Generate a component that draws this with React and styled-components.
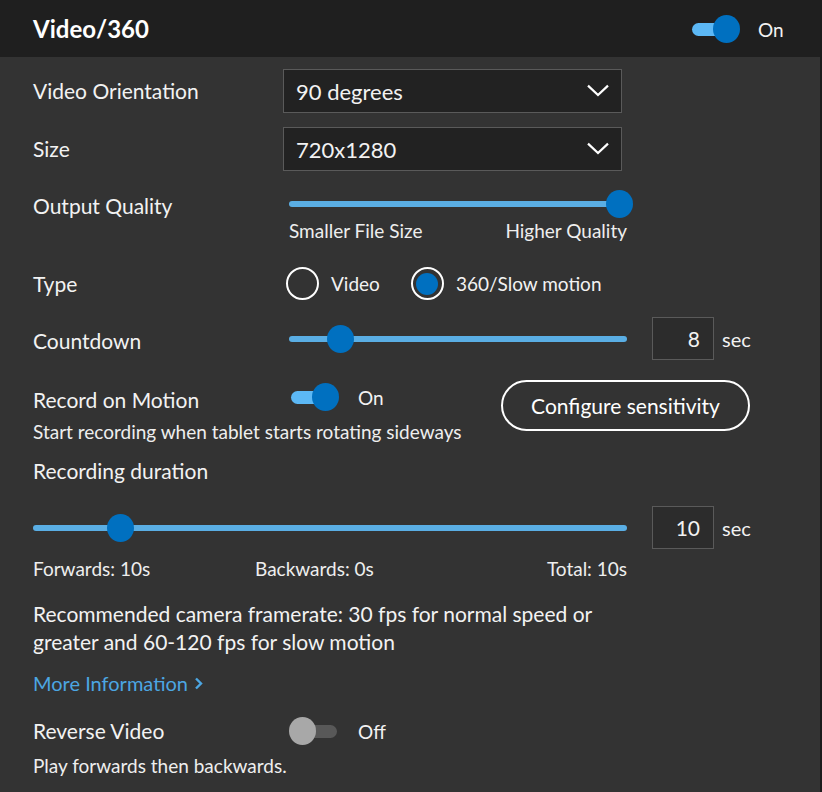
import React from "react";
import styled, { createGlobalStyle } from "styled-components";

const GlobalStyle = createGlobalStyle`
  html, body {
    margin: 0;
    padding: 0;
    background: #333333;
  }
  body {
    font-family: Lato, "Noto Sans", sans-serif;
    color: #f2f2f2;
  }
`;

const Panel = styled.div`
  width: 820px;
  height: 792px;
  background: #333333;
  border-right: 2px solid #1b1b1b;
  overflow: hidden;
`;

const Header = styled.div`
  height: 57px;
  background: #1f1f1f;
  display: flex;
  align-items: center;
  padding: 0 0 0 33px;
`;

const Title = styled.h1`
  margin: 0;
  flex: 1;
  font-size: 24px;
  font-weight: 700;
  color: #ffffff;
`;

const HeaderSwitch = styled.div`
  display: flex;
  align-items: center;
  gap: 18px;
  width: 128px;
  margin-top: 1px;
  font-size: 19px;
`;

const Body = styled.div`
  padding: 12px 0 0 33px;
`;

const Row = styled.div`
  display: grid;
  grid-template-columns: 250px auto;
  align-items: ${(p) => p.$align || "center"};
  margin-top: ${(p) => p.$top || 0}px;
  height: ${(p) => (p.$h ? `${p.$h}px` : "auto")};
`;

const Label = styled.div`
  font-size: 21px;
  line-height: 28px;
  padding-top: ${(p) => p.$pt || 0}px;
`;

const Select = styled.div`
  box-sizing: border-box;
  width: 339px;
  height: 44px;
  background: #222222;
  border: 1px solid #5a5a5a;
  display: flex;
  align-items: center;
  justify-content: space-between;
  padding: 0 12px 0 12px;
  font-size: 22px;
`;

const SliderBox = styled.div`
  position: relative;
  width: ${(p) => p.$w}px;
  height: 30px;
  margin-left: ${(p) => p.$ml || 0}px;
  margin-top: ${(p) => p.$mt || 0}px;
`;

const Track = styled.div`
  position: absolute;
  left: 0;
  right: 0;
  top: 12px;
  height: 6px;
  border-radius: 3px;
  background: #5aaee4;
`;

const Thumb = styled.div`
  position: absolute;
  top: 1px;
  width: 27px;
  height: 28px;
  margin-left: -13.5px;
  border-radius: 50%;
  background: #0070c0;
`;

const SliderCaptions = styled.div`
  display: flex;
  justify-content: space-between;
  width: ${(p) => p.$w}px;
  margin-left: ${(p) => p.$ml || 0}px;
  margin-top: ${(p) => p.$mt || 0}px;
  font-size: 19px;
  line-height: 22px;
  color: #eeeeee;
`;

const Radios = styled.div`
  display: flex;
  align-items: center;
  margin-left: 3px;
`;

const RadioItem = styled.div`
  display: flex;
  align-items: center;
  gap: 12px;
  margin-right: 31px;
  font-size: 19px;
`;

const RadioCircle = styled.div`
  width: 33px;
  height: 33px;
  box-sizing: border-box;
  border: 2.5px solid #ffffff;
  border-radius: 50%;
  display: flex;
  align-items: center;
  justify-content: center;
  &::after {
    content: "";
    display: ${(p) => (p.$on ? "block" : "none")};
    width: 22px;
    height: 22px;
    border-radius: 50%;
    background: #0070c0;
  }
`;

const SliderLine = styled.div`
  display: flex;
  align-items: center;
  margin-top: ${(p) => p.$mt || 0}px;
`;

const NumBox = styled.div`
  width: 62px;
  height: 43px;
  box-sizing: border-box;
  border: 1px solid #5a5a5a;
  background: #2c2c2c;
  margin-left: 25px;
  display: flex;
  align-items: center;
  justify-content: flex-end;
  padding-right: 13px;
  font-size: 21px;
`;

const Unit = styled.span`
  margin-left: 8px;
  font-size: 20px;
`;

const SwitchLine = styled.div`
  display: flex;
  align-items: center;
  gap: ${(p) => p.$gap || 20}px;
  margin-left: ${(p) => p.$ml || 0}px;
  font-size: 19px;
`;

const SwitchBox = styled.div`
  position: relative;
  width: 48px;
  height: 28px;
  flex: none;
`;

const SwitchTrack = styled.div`
  position: absolute;
  top: 8px;
  height: 13px;
  border-radius: 7px;
  left: ${(p) => (p.$on ? "0" : "14px")};
  right: ${(p) => (p.$on ? "14px" : "0")};
  background: ${(p) => (p.$on ? "#5cb8f5" : "#585858")};
`;

const SwitchKnob = styled.div`
  position: absolute;
  top: 0;
  width: 27px;
  height: 28px;
  border-radius: 50%;
  left: ${(p) => (p.$on ? "21px" : "0")};
  background: ${(p) => (p.$on ? "#0070c0" : "#a8a8a8")};
`;

const MotionGrid = styled.div`
  display: grid;
  grid-template-columns: 468px auto;
  margin-top: 20px;
`;

const OutlineButton = styled.button`
  width: 249px;
  height: 51px;
  border: 2px solid #ffffff;
  border-radius: 26px;
  background: transparent;
  color: #ffffff;
  font-family: Lato, "Noto Sans", sans-serif;
  font-size: 21px;
  padding: 0;
`;

const Hint = styled.div`
  font-size: 19px;
  line-height: 24px;
  margin-top: ${(p) => p.$top || 0}px;
  color: #eeeeee;
`;

const Heading = styled.div`
  font-size: 21px;
  line-height: 28px;
  margin-top: ${(p) => p.$top || 0}px;
`;

const Note = styled.p`
  margin: 20px 0 0;
  width: 590px;
  font-size: 21px;
  line-height: 28px;
`;

const Link = styled.a`
  display: inline-flex;
  align-items: center;
  gap: 6px;
  margin-top: 13px;
  font-size: 20px;
  line-height: 28px;
  color: #4ca6e2;
  text-decoration: none;
`;

const Chevron = ({ size = 22 }) => (
  <svg width={size} height={size * 0.6} viewBox="0 0 22 13" fill="none">
    <path d="M1 1.5 L11 11 L21 1.5" stroke="#ffffff" strokeWidth="2.2" />
  </svg>
);

const Toggle = ({ on }) => (
  <SwitchBox>
    <SwitchTrack $on={on} />
    <SwitchKnob $on={on} />
  </SwitchBox>
);

const Slider = ({ width, value, ml, mt }) => {
  const pos = 8 + value * (width - 16);
  return (
    <SliderBox $w={width} $ml={ml} $mt={mt}>
      <Track />
      <Thumb style={{ left: pos }} />
    </SliderBox>
  );
};

const App = () => {
  return (
    <Panel>
      <GlobalStyle />
      <Header>
        <Title>Video/360</Title>
        <HeaderSwitch>
          <Toggle on />
          <span>On</span>
        </HeaderSwitch>
      </Header>
      <Body>
        <Row>
          <Label>Video Orientation</Label>
          <Select>
            90 degrees
            <Chevron />
          </Select>
        </Row>
        <Row $top={14}>
          <Label>Size</Label>
          <Select>
            720x1280
            <Chevron />
          </Select>
        </Row>
        <Row $top={14} $align="start">
          <Label $pt={7}>Output Quality</Label>
          <div>
            <Slider width={338} value={1} ml={6} mt={4} />
            <SliderCaptions $w={338} $ml={6} $mt={1}>
              <span>Smaller File Size</span>
              <span>Higher Quality</span>
            </SliderCaptions>
          </div>
        </Row>
        <Row $top={25} $h={33}>
          <Label>Type</Label>
          <Radios>
            <RadioItem>
              <RadioCircle />
              Video
            </RadioItem>
            <RadioItem>
              <RadioCircle $on />
              360/Slow motion
            </RadioItem>
          </Radios>
        </Row>
        <Row $top={17}>
          <Label $pt={5}>Countdown</Label>
          <SliderLine>
            <Slider width={338} value={0.134} ml={6} />
            <NumBox>8</NumBox>
            <Unit>sec</Unit>
          </SliderLine>
        </Row>
        <MotionGrid>
          <div>
            <Row $h={40} $align="start">
              <Label $pt={6}>Record on Motion</Label>
              <SwitchLine $ml={8} $gap={19} style={{ paddingTop: 3 }}>
                <Toggle on />
                <span>On</span>
              </SwitchLine>
            </Row>
            <Hint>Start recording when tablet starts rotating sideways</Hint>
          </div>
          <div>
            <OutlineButton>Configure sensitivity</OutlineButton>
          </div>
        </MotionGrid>
        <Heading $top={13}>Recording duration</Heading>
        <SliderLine $mt={21}>
          <Slider width={594} value={0.137} />
          <NumBox>10</NumBox>
          <Unit>sec</Unit>
        </SliderLine>
        <SliderCaptions $w={594} $mt={9}>
          <span style={{ width: 222 }}>Forwards: 10s</span>
          <span style={{ flex: 1 }}>Backwards: 0s</span>
          <span>Total: 10s</span>
        </SliderCaptions>
        <Note>
          Recommended camera framerate: 30 fps for normal speed or greater and
          60-120 fps for slow motion
        </Note>
        <Link href="#">
          More Information
          <svg width="9" height="13" viewBox="0 0 9 13">
            <path d="M2 1.5 L7 6.5 L2 11.5" stroke="#4ca6e2" strokeWidth="2.4" fill="none" />
          </svg>
        </Link>
        <Row $top={20}>
          <Label>Reverse Video</Label>
          <SwitchLine $ml={6} $gap={21}>
            <Toggle />
            <span>Off</span>
          </SwitchLine>
        </Row>
        <Hint $top={9}>Play forwards then backwards.</Hint>
      </Body>
    </Panel>
  );
};

export default App;
